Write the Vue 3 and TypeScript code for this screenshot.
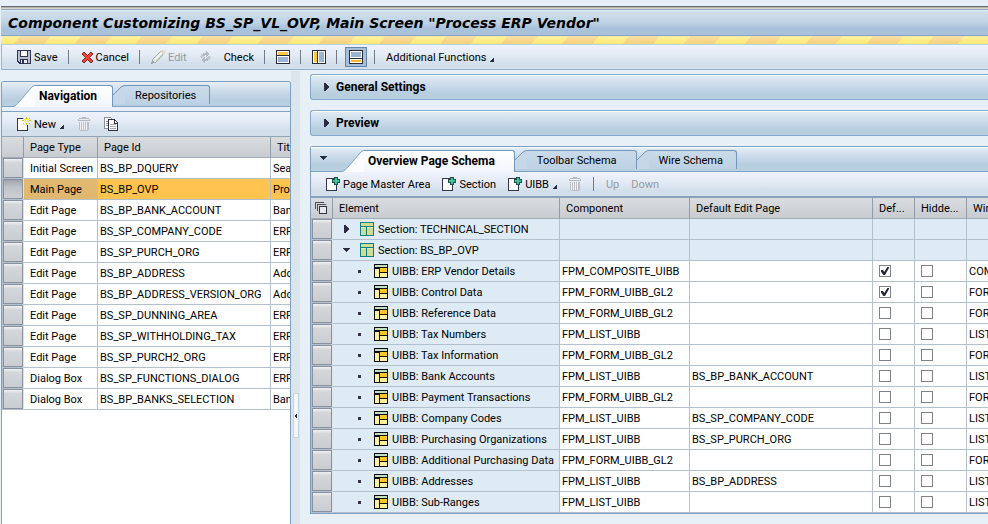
<script setup lang="ts">
import { ref } from 'vue'

interface PageRow { type: string; id: string; title: string }
interface ElementRow {
  kind: 'section' | 'uibb'
  open?: boolean
  label: string
  component?: string
  editPage?: string
  isDefault?: boolean
  hidden?: boolean
  wire?: string
}

const pages: PageRow[] = [
  { type: 'Initial Screen', id: 'BS_BP_DQUERY', title: 'Sea' },
  { type: 'Main Page', id: 'BS_BP_OVP', title: 'Pro' },
  { type: 'Edit Page', id: 'BS_BP_BANK_ACCOUNT', title: 'Ban' },
  { type: 'Edit Page', id: 'BS_SP_COMPANY_CODE', title: 'ERP' },
  { type: 'Edit Page', id: 'BS_SP_PURCH_ORG', title: 'ERP' },
  { type: 'Edit Page', id: 'BS_BP_ADDRESS', title: 'Add' },
  { type: 'Edit Page', id: 'BS_BP_ADDRESS_VERSION_ORG', title: 'Add' },
  { type: 'Edit Page', id: 'BS_SP_DUNNING_AREA', title: 'ERP' },
  { type: 'Edit Page', id: 'BS_SP_WITHHOLDING_TAX', title: 'ERP' },
  { type: 'Edit Page', id: 'BS_SP_PURCH2_ORG', title: 'ERP' },
  { type: 'Dialog Box', id: 'BS_SP_FUNCTIONS_DIALOG', title: 'ERP' },
  { type: 'Dialog Box', id: 'BS_BP_BANKS_SELECTION', title: 'Ban' },
]

const elements = ref<ElementRow[]>([
  { kind: 'section', open: false, label: 'Section: TECHNICAL_SECTION' },
  { kind: 'section', open: true, label: 'Section: BS_BP_OVP' },
  { kind: 'uibb', label: 'UIBB: ERP Vendor Details', component: 'FPM_COMPOSITE_UIBB', isDefault: true, wire: 'COM' },
  { kind: 'uibb', label: 'UIBB: Control Data', component: 'FPM_FORM_UIBB_GL2', isDefault: true, wire: 'FOR' },
  { kind: 'uibb', label: 'UIBB: Reference Data', component: 'FPM_FORM_UIBB_GL2', wire: 'FOR' },
  { kind: 'uibb', label: 'UIBB: Tax Numbers', component: 'FPM_LIST_UIBB', wire: 'LIST' },
  { kind: 'uibb', label: 'UIBB: Tax Information', component: 'FPM_FORM_UIBB_GL2', wire: 'FOR' },
  { kind: 'uibb', label: 'UIBB: Bank Accounts', component: 'FPM_LIST_UIBB', editPage: 'BS_BP_BANK_ACCOUNT', wire: 'LIST' },
  { kind: 'uibb', label: 'UIBB: Payment Transactions', component: 'FPM_FORM_UIBB_GL2', wire: 'FOR' },
  { kind: 'uibb', label: 'UIBB: Company Codes', component: 'FPM_LIST_UIBB', editPage: 'BS_SP_COMPANY_CODE', wire: 'LIST' },
  { kind: 'uibb', label: 'UIBB: Purchasing Organizations', component: 'FPM_LIST_UIBB', editPage: 'BS_SP_PURCH_ORG', wire: 'LIST' },
  { kind: 'uibb', label: 'UIBB: Additional Purchasing Data', component: 'FPM_FORM_UIBB_GL2', wire: 'FOR' },
  { kind: 'uibb', label: 'UIBB: Addresses', component: 'FPM_LIST_UIBB', editPage: 'BS_BP_ADDRESS', wire: 'LIST' },
  { kind: 'uibb', label: 'UIBB: Sub-Ranges', component: 'FPM_LIST_UIBB', wire: 'LIST' },
])

const selected = ref(1)
</script>

<template>
  <div class="screen">
    <svg class="defs" aria-hidden="true">
      <symbol id="i-save" viewBox="0 0 14 14">
        <path d="M0 0h14v14H2l-2-2z" fill="#2f3350" />
        <path d="M1 1h2v6h8V1h2v12h-2V9H3v4L1 11z" fill="#b9bfce" />
        <path d="M4 1h6v5H4z" fill="#fff" />
        <path d="M4 10h6v3H4z" fill="#e9edf5" />
        <path d="M5 10h2v3H5z" fill="#2f3350" />
      </symbol>
      <symbol id="i-cancel" viewBox="0 0 11 11">
        <path d="M0 1h1V0h2v1h1v1h1v1h1V2h1V1h1V0h2v1h1v2h-1v1H9v1H8v1h1v1h1v1h1v2h-1v1H8v-1H7V9H6V8H5v1H4v1H3v1H1v-1H0V8h1V7h1V6h1V5H2V4H1V3H0z" fill="#8c2322" />
        <path d="M1 1h2v1h1v1h1v1h1V3h1V2h1V1h2v2H9v1H8v1H7v1h1v1h1v1h1v2H8V9H7V8H6V7H5v1H4v1H3v1H1V8h1V7h1V6h1V5H3V4H2V3H1z" fill="#f1463c" />
      </symbol>
      <symbol id="i-edit" viewBox="0 0 14 14">
        <path d="M1 13l1-4 8-8 3 3-8 8z" fill="#dfe8dc" stroke="#a9afb4" />
        <path d="M3 9l7-7 1 1-7 7z" fill="#f7fbf4" />
        <path d="M5 11l7-7" stroke="#b9d2b4" />
        <path d="M9 2l2-2h1l2 2v1l-2 2z" fill="#e7d3cf" />
        <path d="M0 14l1-4 3 3z" fill="#a3a8ae" />
      </symbol>
      <symbol id="i-refresh" viewBox="0 0 11 12">
        <path d="M3 5V2h3V0l4 3-4 3V4H5v1z" fill="#b3bac4" />
        <path d="M8 7v3H5v2L1 9l4-3v2h1V7z" fill="#b3bac4" />
        <path d="M0 5h1V3h2v2h1L2 8zM11 7h-1v2H8V7H7l2-3z" fill="#c3c9d1" />
      </symbol>
      <symbol id="i-rows-top" viewBox="0 0 14 14">
        <path d="M0 0h14v14H0z" fill="#2b2c37" />
        <path d="M1 1h12v4H1zM1 6h12v7H1z" fill="#fff" />
        <path d="M2 2h10v3H2z" fill="#ffc83e" />
        <path d="M2 7h10v5H2z" fill="#9ab4d3" />
      </symbol>
      <symbol id="i-cols" viewBox="0 0 14 14">
        <path d="M0 0h14v14H0z" fill="#2b2c37" />
        <path d="M1 1h4v12H1zM6 1h7v12H6z" fill="#fff" />
        <path d="M2 2h3v10H2z" fill="#ffc83e" />
        <path d="M7 2h5v10H7z" fill="#9ab4d3" />
      </symbol>
      <symbol id="i-rows-bottom" viewBox="0 0 14 14">
        <path d="M0 0h14v14H0z" fill="#2b2c37" />
        <path d="M1 1h12v7H1zM1 9h12v4H1z" fill="#fff" />
        <path d="M2 2h10v5H2z" fill="#9ab4d3" />
        <path d="M2 10h10v2H2z" fill="#ffb81c" />
      </symbol>
      <symbol id="i-corner" viewBox="0 0 5 5">
        <path d="M5 0v5H0z" fill="#2b2c42" />
      </symbol>
      <symbol id="i-new" viewBox="0 0 14 14">
        <path d="M.5 1.500h6M.5 1v12.500h10V8" fill="none" stroke="#34354c" />
        <path d="M1 2h8v6h1v5H1z" fill="#fff" />
        <path d="M5 3h2v1H5zM12 3h2v1h-2zM9 0h1v2H9zM9 6h1v2H9zM6 1h1v1H6zM12 1h1v1h-1zM6 6h1v1H6zM12 6h1v1h-1z" fill="#c9c800" />
        <path d="M7 2h1V1h1v1h1V1h1v1h1v1h-1v1h1v1h-1v1h-1V5H9v1H8V5H7V4h1V3H7z" fill="#f4f030" />
        <path d="M9 3h1v2H9z" fill="#fff" />
      </symbol>
      <symbol id="i-trash" viewBox="0 0 12 14">
        <path d="M4 0h4v1h3v1h1v2H0V2h1V1h3z" fill="#b4b8bf" />
        <path d="M1 2h10v1H1z" fill="#f0f0f2" />
        <path d="M1 5h10v8h-1v1H2v-1H1z" fill="#bcbfc5" />
        <path d="M2 5h1v8H2zM4 5h1v8H4zM6 5h1v8H6zM8 5h1v8H8z" fill="#f0f1f4" />
      </symbol>
      <symbol id="i-copy" viewBox="0 0 14 14">
        <path d="M.5.5h6l2 2v9h-8z" fill="#fff" stroke="#8b90a0" />
        <path d="M2 4h2M2 6h2M2 8h2" stroke="#8b90a0" />
        <path d="M4.500 2.500h6l3 3v8h-9z" fill="#fff" stroke="#2f3048" />
        <path d="M10 2v4h4" fill="none" stroke="#2f3048" />
        <path d="M6 7h6v1H6zM6 9h6v1H6zM6 11h6v1H6z" fill="#a3a8ba" />
      </symbol>
      <symbol id="i-add" viewBox="0 0 14 14">
        <path d="M.5 1.500h10v12H.5z" fill="#fff" stroke="#34354c" />
        <path d="M9 0h3v2h2v4h-2v2H8V6H6V2h2V0z" fill="#1c4f45" />
        <path d="M9 1h2v2h2v2h-2v2H9V5H7V3h2z" fill="#3fc39a" />
      </symbol>
      <symbol id="i-select" viewBox="0 0 13 13">
        <path d="M0 0h9v1H1v6H0zM2 2h9v1H3v6H2z" fill="#4b4c5a" />
        <path d="M4.500 4.500h7v7h-7z" fill="#e6e8ea" stroke="#33343f" />
      </symbol>
      <symbol id="i-section" viewBox="0 0 14 14">
        <path d="M0 0h14v14H0z" fill="#0a7f7f" />
        <path d="M1 1h12v3H1zM1 5h5v8H1zM7 5h6v8H7z" fill="#d0dc96" />
        <path d="M1 5h5v1H1zM7 5h6v1H7z" fill="#e6ebbd" />
      </symbol>
      <symbol id="i-uibb" viewBox="0 0 14 14">
        <path d="M0 0h14v14H0z" fill="#0c0c10" />
        <path d="M1 1h12v2H1z" fill="#bfe0c4" />
        <path d="M1 5h4v8H1z" fill="#fff0a0" />
        <path d="M6 4h7v4H6z" fill="#ffc529" />
        <path d="M6 9h7v4H6z" fill="#fff0a0" />
      </symbol>
      <symbol id="i-right" viewBox="0 0 5 8">
        <path d="M0 0h1l4 4-4 4H0z" fill="#2b2c42" />
      </symbol>
      <symbol id="i-down" viewBox="0 0 8 4">
        <path d="M0 0h8L4 4z" fill="#2b2c42" />
      </symbol>
    </svg>

    <header class="title-bar"><h1>Component Customizing BS_SP_VL_OVP, Main Screen "Process ERP Vendor"</h1></header>
    <div class="stripes"></div>

    <div class="toolbar main-bar" role="toolbar">
      <button type="button"><svg class="i14"><use href="#i-save" /></svg>Save</button>
      <span class="sep"></span>
      <button type="button" class="cancel"><svg class="i11"><use href="#i-cancel" /></svg>Cancel</button>
      <span class="sep"></span>
      <button type="button" disabled><svg class="i14"><use href="#i-edit" /></svg>Edit</button>
      <button type="button" class="refresh" disabled aria-label="Refresh"><svg class="i11"><use href="#i-refresh" /></svg></button>
      <button type="button">Check</button>
      <span class="sep"></span>
      <button type="button" aria-label="Layout top"><svg class="i14"><use href="#i-rows-top" /></svg></button>
      <span class="sep"></span>
      <button type="button" aria-label="Layout left"><svg class="i14"><use href="#i-cols" /></svg></button>
      <span class="sep"></span>
      <button type="button" class="pressed" aria-pressed="true" aria-label="Layout bottom"><svg class="i14"><use href="#i-rows-bottom" /></svg></button>
      <span class="sep"></span>
      <button type="button" class="menu">Additional Functions<svg class="i5"><use href="#i-corner" /></svg></button>
    </div>

    <main class="work">
      <section class="nav-panel">
        <div class="tabs" role="tablist">
          <button type="button" class="tab active" role="tab" aria-selected="true">
            <svg class="slant" viewBox="0 0 22 22"><path d="M0 22C3 21 4 19 6 17L18 3Q20 0 22 0V22z" fill="#fbfcff" /><path d="M0 21.500C3 21 4 19 6 17L18 3Q20 .5 22 .5" fill="none" stroke="#7fa3c6" /></svg>
            <span class="face">Navigation</span>
          </button>
          <button type="button" class="tab" role="tab" aria-selected="false">
            <svg class="slant" viewBox="0 0 12 22"><path d="M0 10L8 2Q10 0 12 0V19H0z" fill="#c6d8e8" /><path d="M0 10L8 2Q10 .5 12 .5" fill="none" stroke="#7397b9" /></svg>
            <span class="face">Repositories</span>
          </button>
        </div>
        <div class="tab-gap"></div>
        <div class="toolbar nav-bar" role="toolbar">
          <button type="button" class="menu"><svg class="i14"><use href="#i-new" /></svg>New<svg class="i5"><use href="#i-corner" /></svg></button>
          <button type="button" disabled aria-label="Delete"><svg class="i12"><use href="#i-trash" /></svg></button>
          <button type="button" aria-label="Copy"><svg class="i14"><use href="#i-copy" /></svg></button>
        </div>
        <table>
          <colgroup><col class="c-sel" /><col class="c-type" /><col class="c-id" /><col /></colgroup>
          <thead>
            <tr><th></th><th>Page Type</th><th>Page Id</th><th>Title</th></tr>
          </thead>
          <tbody>
            <tr v-for="(p, i) in pages" :key="p.id" :class="{ selected: i === selected }">
              <td class="sel"><button type="button" :aria-label="p.id" @click="selected = i"></button></td>
              <td class="type">{{ p.type }}</td>
              <td>{{ p.id }}</td>
              <td>{{ p.title }}</td>
            </tr>
          </tbody>
        </table>
      </section>

      <div class="splitter"><button type="button" aria-label="Collapse"><svg viewBox="0 0 3 6"><path d="M3 0v6L0 3z" fill="#20213a" /></svg></button></div>

      <div class="content">
        <button type="button" class="tray"><svg class="a-right"><use href="#i-right" /></svg>General Settings</button>
        <button type="button" class="tray"><svg class="a-right"><use href="#i-right" /></svg>Preview</button>

        <section class="schema">
          <div class="tabs" role="tablist">
            <button type="button" class="collapse" aria-label="Collapse"><svg class="a-down"><use href="#i-down" /></svg></button>
            <button type="button" class="tab active" role="tab" aria-selected="true">
              <svg class="slant" viewBox="0 0 22 22"><path d="M0 22C3 21 4 19 6 17L18 3Q20 0 22 0V22z" fill="#fbfcff" /><path d="M0 21.500C3 21 4 19 6 17L18 3Q20 .5 22 .5" fill="none" stroke="#7fa3c6" /></svg>
              <span class="face">Overview Page Schema</span>
            </button>
            <button type="button" class="tab wide" role="tab" aria-selected="false">
              <svg class="slant" viewBox="0 0 12 22"><path d="M0 10L8 2Q10 0 12 0V19H0z" fill="#c6d8e8" /><path d="M0 10L8 2Q10 .5 12 .5" fill="none" stroke="#7397b9" /></svg>
              <span class="face">Toolbar Schema</span>
            </button>
            <button type="button" class="tab" role="tab" aria-selected="false">
              <svg class="slant" viewBox="0 0 12 22"><path d="M0 10L8 2Q10 0 12 0V19H0z" fill="#c6d8e8" /><path d="M0 10L8 2Q10 .5 12 .5" fill="none" stroke="#7397b9" /></svg>
              <span class="face">Wire Schema</span>
            </button>
          </div>
          <div class="toolbar schema-bar" role="toolbar">
            <button type="button"><svg class="i14"><use href="#i-add" /></svg>Page Master Area</button>
            <button type="button"><svg class="i14"><use href="#i-add" /></svg>Section</button>
            <button type="button" class="menu"><svg class="i14"><use href="#i-add" /></svg>UIBB<svg class="i5"><use href="#i-corner" /></svg></button>
            <button type="button" disabled aria-label="Delete"><svg class="i12"><use href="#i-trash" /></svg></button>
            <span class="sep"></span>
            <button type="button" disabled>Up</button>
            <button type="button" disabled>Down</button>
          </div>
          <table>
            <colgroup>
              <col class="c-sel" /><col class="c-element" /><col class="c-component" /><col class="c-edit" /><col class="c-default" /><col class="c-hidden" /><col />
            </colgroup>
            <thead>
              <tr>
                <th class="all"><button type="button" aria-label="Select all"><svg class="i13"><use href="#i-select" /></svg></button></th>
                <th>Element</th><th>Component</th><th>Default Edit Page</th><th>Def...</th><th>Hidde...</th><th>Wire</th>
              </tr>
            </thead>
            <tbody>
              <tr v-for="row in elements" :key="row.label" :class="row.kind">
                <td class="sel"><button type="button" :aria-label="row.label"></button></td>
                <td class="element">
                  <div class="node">
                    <button v-if="row.kind === 'section'" type="button" class="toggle" :aria-expanded="row.open" aria-label="Toggle">
                      <svg v-if="row.open" class="a-down"><use href="#i-down" /></svg>
                      <svg v-else class="a-right"><use href="#i-right" /></svg>
                    </button>
                    <span v-else class="bullet"></span>
                    <svg class="i14"><use :href="row.kind === 'section' ? '#i-section' : '#i-uibb'" /></svg>
                    <span class="label">{{ row.label }}</span>
                  </div>
                </td>
                <td>{{ row.component }}</td>
                <td>{{ row.editPage }}</td>
                <td class="check"><input v-if="row.kind === 'uibb'" v-model="row.isDefault" type="checkbox" :aria-label="row.label + ' default'" /></td>
                <td class="check"><input v-if="row.kind === 'uibb'" v-model="row.hidden" type="checkbox" :aria-label="row.label + ' hidden'" /></td>
                <td>{{ row.wire }}</td>
              </tr>
            </tbody>
          </table>
        </section>
      </div>
    </main>
  </div>
</template>

<style>
body {
  background: #e8f0f7;
  overflow: hidden;
}
</style>

<style scoped>
.screen {
  box-sizing: border-box;
  min-height: 100vh;
  display: flex;
  flex-direction: column;
  border-top: 6px solid #e6eefa;
  background: #e8f0f7;
  color: #000;
  font: 11px/15px Roboto, "Liberation Sans", Arial, sans-serif;
  overflow: hidden;
}
.defs { position: absolute; width: 0; height: 0; }
svg { display: block; flex: none; shape-rendering: crispEdges; }
.slant { shape-rendering: auto; }
.i14 { width: 14px; height: 14px; }
.i13 { width: 13px; height: 13px; }
.i12 { width: 12px; height: 14px; }
.i11 { width: 11px; height: 12px; }
.i5 { width: 5px; height: 5px; }
.a-right { width: 5px; height: 8px; }
.a-down { width: 8px; height: 4px; }
button {
  font: inherit;
  color: inherit;
  background: none;
  border: 0;
  padding: 0;
  margin: 0;
  white-space: nowrap;
}

.title-bar {
  margin-left: 1px;
  height: 25px;
  border-top: 1px solid #666b70;
  border-bottom: 1px solid #86a3c3;
  box-shadow: inset 0 1px #b5b0a8, inset 0 2px #d8d6d0, inset 0 3px #8ea6bd, inset 0 4px #e4eef6;
  background: linear-gradient(#cfdfe9, #cfdfe9 20%, #bfd3e4 55%, #a9c2dc 75%, #a9c1db);
  padding: 3px 0 0 7px;
}
h1 {
  margin: 0;
  font: italic bold 14px/27px "DejaVu Sans", Verdana, sans-serif;
  white-space: nowrap;
}
.stripes {
  margin-left: 1px;
  height: 8px;
  background:
    linear-gradient(rgba(255, 255, 255, .35), rgba(255, 255, 255, 0)),
    repeating-linear-gradient(128deg, #ffe873 0 15px, #f5d078 15px 39px, #ffe873 39px 48px);
  border-bottom: 1px solid #b4d3e4;
}

.toolbar {
  display: flex;
  align-items: center;
  background: linear-gradient(#eef2fb, #e4ebf5 40%, #d3e0eb 75%, #d3e0eb);
}
.toolbar button { display: flex; align-items: center; gap: 3px; line-height: 17px; }
.toolbar button:disabled { color: #96999e; }
.toolbar .menu .i5 { align-self: flex-end; margin-bottom: 4px; }
.sep { width: 1px; height: 14px; background: #6f7a8c; }
.main-bar {
  height: 24px;
  margin-left: 1px;
  padding-left: 15px;
  gap: 10px;
  border-left: 1px solid #9fb8d0;
  border-bottom: 1px solid #92afcb;
}
.main-bar .sep { margin-right: 1px; }
.main-bar .cancel { padding-left: 2px; }
.main-bar .refresh { margin: 0 3px; }
.main-bar .pressed {
  padding: 2px 3px;
  border: 1px solid #6486ad;
  background: #a5bfdb;
  margin: 0 -3px;
  height: 20px;
  box-sizing: border-box;
}

.work { flex: 1; display: flex; margin-left: 1px; min-width: 0; }
.nav-panel {
  box-sizing: border-box;
  flex: none;
  width: 290px;
  margin-top: 11px;
  border: 1px solid #7c9fc3;
  border-bottom: 0;
  border-radius: 3px 3px 0 0;
  background: #fff;
  overflow: hidden;
}
.tabs {
  display: flex;
  align-items: flex-end;
  height: 24px;
  background: linear-gradient(#e6eef5, #c7d8e8 45%, #b7cede 75%, #b9d0e2);
  border-bottom: 1px solid #7fa3c6;
}
.tab { display: flex; height: 22px; margin-bottom: -1px; position: relative; }
.slant { width: 12px; height: 22px; }
.face {
  height: 18px;
  border-top: 1px solid #7397b9;
  border-right: 1px solid #7397b9;
  border-radius: 0 3px 0 0;
  background: linear-gradient(#cadbea, #bcd1e4);
  padding: 0 13px 0 10px;
  line-height: 20px;
}
.wide .face { padding-right: 19px; }
.active .slant { width: 22px; }
.active .face {
  height: 21px;
  padding: 0 15px 0 4px;
  font-weight: bold;
  font-size: 12px;
  background: linear-gradient(#fff, #f1f5fc);
}
.schema .active .face { padding-right: 19px; }
.nav-panel .tabs { padding-left: 11px; }
.tab-gap { height: 4px; background: #e9f0f9; border-bottom: 1px solid #7fa3c6; }
.nav-bar { height: 24px; padding-left: 15px; gap: 14px; border-bottom: 1px solid #92a6b9; }

table { width: 100%; table-layout: fixed; border-spacing: 0; }
.c-sel { width: 22px; }
.c-type { width: 74px; }
.c-id { width: 173px; }
.c-element { width: 227px; }
.c-component { width: 130px; }
.c-edit { width: 183px; }
.c-default { width: 42px; }
.c-hidden { width: 52px; }
th {
  height: 20px;
  padding: 0 0 0 6px;
  text-align: left;
  font-weight: normal;
  background: linear-gradient(#dadde0, #c8ccd0);
  border-right: 1px solid #929ba8;
  border-bottom: 1px solid #a3adb9;
  white-space: nowrap;
  overflow: hidden;
}
td {
  height: 20px;
  padding: 0 0 0 2px;
  border-right: 1px solid #b3c0ce;
  border-bottom: 1px solid #b3c0ce;
  background: #fff;
  white-space: nowrap;
  overflow: hidden;
}
th:last-child, td:last-child { border-right: 0; }
.type { padding-left: 6px; }
.sel { background: #b1bfcd; padding-left: 1px; border-right-color: #dde3ea; }
.sel button {
  display: block;
  box-sizing: border-box;
  width: 20px;
  height: 20px;
  border: 1px solid #8a919e;
  background: linear-gradient(#f0f1f3, #d4d6da 20%, #c9cdd1);
}
.selected td { background: #ffc44f; }
.selected .type { background: #e0b870; }
.selected .sel { background: #b1bfcd; }
.selected .sel button { background: linear-gradient(#9ea3ad, #bfc3c8 40%, #cdd0d3); }

.splitter {
  flex: none;
  width: 9px;
  margin-top: 1px;
  background: #dae5ec;
  display: flex;
  align-items: flex-start;
  padding-top: 322px;
  box-sizing: border-box;
}
.splitter button {
  box-sizing: border-box;
  margin-left: 2px;
  width: 6px;
  height: 45px;
  border: 1px solid #c2d4de;
  background: #f3f7fb;
}
.splitter svg { width: 3px; height: 6px; margin: 0; }

.content {
  flex: 1;
  min-width: 0;
  padding: 4px 0 0 10px;
  display: flex;
  flex-direction: column;
  gap: 10px;
}
.tray {
  box-sizing: border-box;
  height: 26px;
  display: flex;
  align-items: center;
  gap: 7px;
  padding-left: 13px;
  border: 1px solid #86a8ca;
  border-right: 0;
  border-radius: 3px 0 0 3px;
  box-shadow: inset 0 1px #fff;
  background: linear-gradient(#e3ecf4, #c9daea 45%, #b8cfe0 75%, #b8cfe0);
  font-size: 12px;
  line-height: 16px;
  font-weight: bold;
}
.schema {
  border: 1px solid #7c9fc3;
  border-right: 0;
  border-radius: 3px 0 0 0;
  background: #b1bfcd;
}
.schema .tabs { box-shadow: inset 0 1px #fff; }
.collapse { align-self: flex-start; width: 31px; padding: 9px 0 0 8px; }
.schema-bar { height: 24px; padding-left: 15px; gap: 12px; border-bottom: 2px solid #86a2bf; }
.all { padding-left: 4px; }
.all button { display: block; }
.section td:not(.sel), .uibb .element { background: #deebf5; }
.element { padding: 0; }
.node { display: flex; align-items: center; height: 20px; gap: 4px; padding-left: 9px; }
.toggle { display: flex; align-items: center; justify-content: center; width: 8px; height: 14px; margin-right: 6px; }
.uibb .node { padding-left: 25px; }
.bullet { width: 3px; height: 3px; background: #33344a; margin-right: 9px; }
.check { padding-left: 6px; }
input {
  appearance: none;
  display: block;
  box-sizing: border-box;
  width: 12px;
  height: 12px;
  margin: 0;
  border: 1px solid #7e8187;
  background: #fff;
}
input:checked::after {
  content: "";
  display: block;
  width: 8px;
  height: 8px;
  margin: 1px;
  background: #23243c;
  clip-path: polygon(0 38%, 25% 38%, 40% 62%, 80% 0, 100% 0, 100% 12%, 50% 100%, 30% 100%, 0 55%);
}
</style>
